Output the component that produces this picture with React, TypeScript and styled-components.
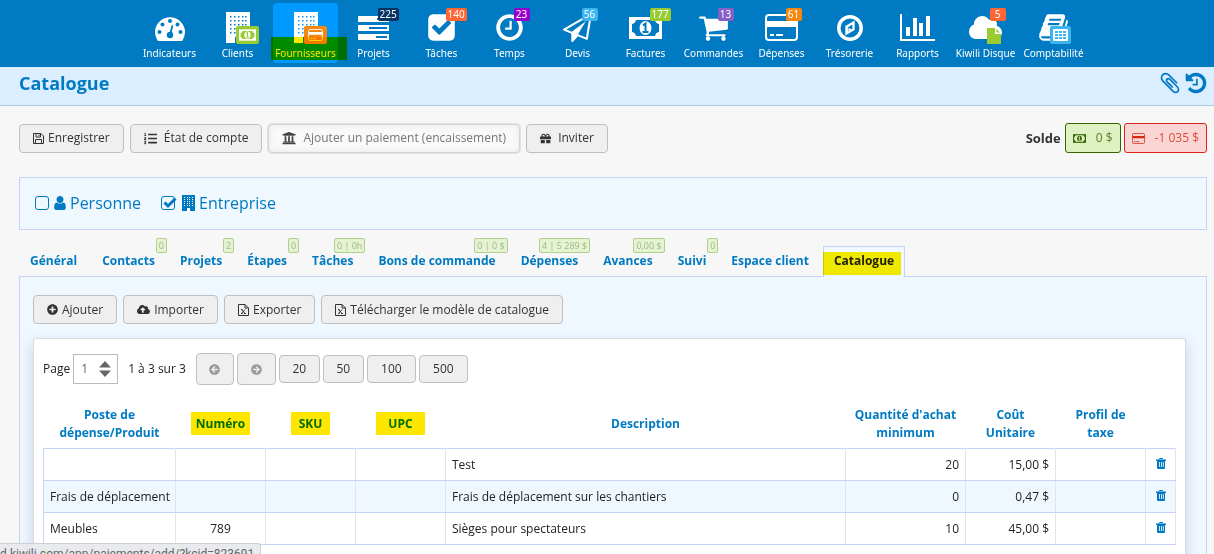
import React from "react";
import styled, { createGlobalStyle, css } from "styled-components";
import {
  FaCloud,
  FaCloudUploadAlt,
  FaListOl,
  FaUniversity,
  FaGift,
  FaPlusCircle,
  FaArrowCircleLeft,
  FaArrowCircleRight,
} from "react-icons/fa";

const blue = "#007ac2";
const line = "#c6d2f6";
const pale = "#eff7ff";

const GlobalStyle = createGlobalStyle`
  *, *::before, *::after { box-sizing: border-box; }
  body {
    margin: 0;
    background: #f7f7f7;
    color: #222;
    font-family: "Open Sans", "Noto Sans", sans-serif;
    font-size: 12px;
    line-height: 18px;
  }
  a { color: inherit; text-decoration: none; }
  button, input { font: inherit; color: inherit; }
`;

/* ---------- icons ---------- */

const PATHS = {
  plane:
    "M1764 11q33 24 27 64l-256 1536q-5 29-32 45-14 8-31 8-11 0-24-5l-527-215-298 327q-18 21-47 21-14 0-23-4-19-7-30-23.5t-11-36.5v-452l-472-193q-37-14-40-55-3-39 32-59l1664-960q35-21 68 2zm-342 1499l221-1323-1434 827 336 137 863-639-478 797z",
  book: "M1703 478q40 57 18 129l-275 906q-19 64-76.5 107.5t-122.5 43.5h-923q-77 0-148.5-53.5t-99.5-131.5q-24-67-2-127 0-4 3-27t4-37q1-8-3-21.5t-3-19.5q2-11 8-21t16.5-23.5 16.5-23.5q23-38 45-91.5t30-91.5q3-10 .5-30t-.5-28q3-11 17-28t17-23q21-36 42-92t25-90q1-9-2.5-32t.5-28q4-13 22-30.5t22-22.5q19-26 42.5-84.5t27.5-96.5q1-8-3-25.5t-2-26.5q2-8 9-18t18-23 17-21q8-12 16.5-30.5t15-35 16-36 19.5-32 26.5-23.5 36-11.5 47.5 5.5l-1 3q38-9 51-9h761q74 0 114 56t18 130l-274 906q-36 119-71.5 153.5t-128.5 34.5h-869q-27 0-38 15-11 16-1 43 24 70 144 70h923q29 0 56-15.5t35-41.5l300-987q7-22 5-57 38 15 59 43zm-1064 2q-4 13 2 22.5t20 9.5h608q13 0 25.5-9.5t16.5-22.5l21-64q4-13-2-22.5t-20-9.5h-608q-13 0-25.5 9.5t-16.5 22.5zm-83 256q-4 13 2 22.5t20 9.5h608q13 0 25.5-9.5t16.5-22.5l21-64q4-13-2-22.5t-20-9.5h-608q-13 0-25.5 9.5t-16.5 22.5z",
  cart: "M704 1536q0 52-38 90t-90 38-90-38-38-90 38-90 90-38 90 38 38 90zm896 0q0 52-38 90t-90 38-90-38-38-90 38-90 90-38 90 38 38 90zm128-1088v512q0 24-16.5 42.5t-40.5 21.5l-1044 122q13 60 13 70 0 16-24 64h920q26 0 45 19t19 45-19 45-45 19h-1024q-26 0-45-19t-19-45q0-11 8-31.5t16-36 21.5-40 15.5-29.5l-177-823h-204q-26 0-45-19t-19-45 19-45 45-19h256q16 0 28.5 6.5t19.5 15.5 13 24.5 8 26 5.5 29.5 4.5 26h1201q26 0 45 19t19 45z",
  check:
    "M813 1299l614-614q19-19 19-45t-19-45l-102-102q-19-19-45-19t-45 19l-467 467-211-211q-19-19-45-19t-45 19l-102 102q-19 19-19 45t19 45l358 358q19 19 45 19t45-19zm851-883v960q0 119-84.5 203.5t-203.5 84.5h-960q-119 0-203.5-84.5t-84.5-203.5v-960q0-119 84.5-203.5t203.5-84.5h960q119 0 203.5 84.5t84.5 203.5z",
  clock:
    "M1024 544v448q0 14-9 23t-23 9h-320q-14 0-23-9t-9-23v-64q0-14 9-23t23-9h224v-352q0-14 9-23t23-9h64q14 0 23 9t9 23zm416 352q0-148-73-273t-198-198-273-73-273 73-198 198-73 273 73 273 198 198 273 73 273-73 198-198 73-273zm224 0q0 209-103 385.5t-279.5 279.5-385.5 103-385.5-103-279.5-279.5-103-385.5 103-385.5 279.5-279.5 385.5-103 385.5 103 279.5 279.5 103 385.5z",
  history:
    "M1664 896q0 156-61 298t-164 245-245 164-298 61q-172 0-327-72.5t-264-204.5q-7-10-6.5-22.5t8.5-20.5l137-138q10-9 25-9 16 2 23 12 73 95 179 147t225 52q104 0 198.5-40.5t163.5-109.5 109.5-163.5 40.5-198.5-40.5-198.5-109.5-163.5-163.5-109.5-198.5-40.5q-98 0-188 35.5t-160 101.5l137 138q31 30 14 69-17 40-59 40h-448q-26 0-45-19t-19-45v-448q0-42 40-59 39-17 69 14l130 129q107-101 244.5-156.5t284.5-55.5q156 0 298 61t245 164 164 245 61 298zm-640-288v448q0 14-9 23t-23 9h-320q-14 0-23-9t-9-23v-64q0-14 9-23t23-9h224v-352q0-14 9-23t23-9h64q14 0 23 9t9 23z",
  clip: "M1596 1385q0 117-79 196t-196 79q-135 0-235-100l-777-776q-113-115-113-271 0-159 110-270t269-111q158 0 273 113l605 606q10 10 10 22 0 16-30.5 46.5t-46.5 30.5q-13 0-23-10l-606-607q-79-77-181-77-106 0-179 75t-73 181q0 105 76 181l776 777q63 63 145 63 64 0 106-42t42-106q0-82-63-145l-581-581q-26-24-60-24-29 0-48 19t-19 48q0 32 25 59l410 410q10 10 10 22 0 16-31 47t-47 31q-12 0-22-10l-410-410q-63-61-63-149 0-82 57-139t139-57q88 0 149 63l581 581q100 98 100 235z",
};

const Glyph = ({ name, size }: { name: keyof typeof PATHS; size: number }) => (
  <svg width={size} height={size} viewBox="0 0 1792 1792" fill="currentColor" aria-hidden>
    <path d={PATHS[name]} />
  </svg>
);

const UserIcon = () => (
  <svg width="12" height="14" viewBox="256 128 1280 1536" fill="currentColor" aria-hidden>
    <path d="M1536 1399q0 109-62.5 187t-150.5 78h-854q-88 0-150.5-78t-62.5-187q0-85 8.5-160.5t31.5-152 58.5-131 94-89 134.5-34.5q131 128 313 128t313-128q76 0 134.5 34.5t94 89 58.5 131 31.5 152 8.5 160.5zm-256-887q0 159-112.5 271.5t-271.5 112.5-271.5-112.5-112.5-271.5 112.5-271.5 271.5-112.5 271.5 112.5 112.5 271.5z" />
  </svg>
);

const Gauge = () => (
  <svg width="32" height="26" viewBox="0 0 32 26" aria-hidden>
    <path d="M3.500 25.500A15 15 0 1 1 28.500 25.500Q28 26 27 26H5Q4 26 3.500 25.500z" fill="#fff" />
    <g fill={blue}>
      <circle cx="5.500" cy="17" r="2" />
      <circle cx="8.500" cy="9.500" r="2" />
      <circle cx="16" cy="6" r="2" />
      <circle cx="23.500" cy="9.500" r="2" />
      <circle cx="26.500" cy="17" r="2" />
      <circle cx="16" cy="20" r="3.200" />
    </g>
    <path d="M16.300 19L18.300 11" stroke={blue} strokeWidth="1.800" strokeLinecap="round" />
  </svg>
);

const Building = ({ hole = blue }: { hole?: string }) => (
  <svg width="24" height="31" viewBox="0 0 24 31" aria-hidden>
    <rect width="24" height="31" fill="currentColor" />
    {[4, 8, 12, 16, 20].map((y) =>
      [4, 8, 12, 16, 19].map((x) => (
        <rect key={`${x}-${y}`} x={x} y={y} width="1.500" height="1.500" fill={hole} />
      ))
    )}
    <rect x="9" y="25" width="6" height="6" fill={hole} />
  </svg>
);

const SmallBuilding = () => (
  <svg width="13" height="16" viewBox="0 0 13 16" aria-hidden>
    <rect width="13" height="16" fill="currentColor" />
    {[2, 4, 6, 8, 10].map((y) =>
      [2, 5, 7, 10].map((x) => <rect key={`${x}-${y}`} x={x} y={y} width="1" height="1" fill="#fff" />)
    )}
    <rect x="5" y="13" width="3" height="3" fill="#fff" />
  </svg>
);

const Note = ({ width, height, hole = blue }: { width: number; height: number; hole?: string }) => (
  <svg width={width} height={height} viewBox="0 0 33 22" aria-hidden>
    <rect width="33" height="22" fill="currentColor" />
    <path d="M7 3H26A5 5 0 0 0 30 7V15A5 5 0 0 0 26 19H7A5 5 0 0 0 3 15V7A5 5 0 0 0 7 3z" fill={hole} />
    <ellipse cx="16.500" cy="11" rx="6" ry="7" fill="currentColor" />
    <path d="M14 8.500L16.500 6.500V14.500M13.500 15H19.500" stroke={hole} strokeWidth="2" fill="none" />
  </svg>
);

const Card = ({ width, height }: { width: number; height: number }) => (
  <svg width={width} height={height} viewBox="0 0 33 27" aria-hidden>
    <rect x="1" y="1" width="31" height="25" rx="3" fill="none" stroke="currentColor" strokeWidth="2" />
    <path d="M1 7H32V13H1zM5 20H9V22H5zM11 20H18V22H11z" fill="currentColor" />
  </svg>
);

const Servers = () => (
  <svg width="31" height="24" viewBox="0 0 31 24" aria-hidden>
    <path d="M0 0H31V6H0zM0 9H31V15H0zM0 18H31V24H0z" fill="#fff" />
    <path d="M19 2H29V4H19zM11 11H29V13H11zM18 20H29V22H18z" fill={blue} />
  </svg>
);

const Compass = () => (
  <svg width="26" height="26" viewBox="0 0 26 26" aria-hidden>
    <circle cx="13" cy="13" r="11.200" fill="none" stroke="#fff" strokeWidth="3.500" />
    <path d="M8.300 11L17.700 5.500V15L8.300 20.500z" fill="#fff" />
    <path d="M10.800 12.500L15.300 9.500V13.800L11 16.600z" fill={blue} />
    <path d="M11.500 12.700L15 14.700L11.500 16.500z" fill="#fff" />
  </svg>
);

const Bars = () => (
  <svg width="35" height="27" viewBox="0 0 35 27" aria-hidden>
    <path
      d="M0 0H2V25H35V27H0zM6 13H10V22H6zM13 4H17V22H13zM19 9H23V22H19zM26 2H30V22H26z"
      fill="#fff"
    />
  </svg>
);

const Leaf = () => (
  <svg width="14" height="16" viewBox="0 0 14 16" aria-hidden>
    <path d="M0 0H8V6H14V16H0z" fill="#9c3" />
    <path d="M9 0L14 5H9z" fill="#9c3" stroke="#fff" strokeWidth="1" />
  </svg>
);

const Sheet = () => (
  <svg width="21" height="18" viewBox="0 0 21 18" aria-hidden>
    <rect width="21" height="18" rx="2" fill="#3cb4f0" />
    <rect x="3" y="3" width="15" height="12" rx="1" fill="#fff" />
    {[5, 8, 11].map((y) =>
      [5, 9, 13].map((x) => <rect key={`${x}-${y}`} x={x} y={y} width="3" height="2" fill="#3cb4f0" />)
    )}
  </svg>
);

const Trash = () => (
  <svg width="10" height="11" viewBox="0 0 10 11" aria-hidden>
    <path d="M3 1.500Q3 .500 4 .500H6Q7 .500 7 1.500" fill="none" stroke={blue} />
    <path d="M0 1.500H10V3H0z" fill={blue} />
    <path d="M1 3H9V10Q9 11 8 11H2Q1 11 1 10z" fill={blue} />
    <path d="M3.500 4V9M5.500 4V9M7.300 4V9" stroke="#cfe5f5" strokeWidth="1" />
  </svg>
);

const Floppy = () => (
  <svg width="11" height="11" viewBox="0 0 11 11" fill="none" stroke="currentColor" aria-hidden>
    <path d="M.500 .500H8L10.500 3V10.500H.500zM3 .500V4H7.500V.500M2.500 10.500V6.500H8.500V10.500M6 1.500V3" />
  </svg>
);

const ExcelFile = () => (
  <svg width="11" height="12" viewBox="0 0 11 12" fill="none" stroke="currentColor" aria-hidden>
    <path d="M.500 .500H7L10.500 4V11.500H.500zM7 .500V4H10.500" />
    <path d="M3.500 5.500L7 9.500M7 5.500L3.500 9.500M3 9.500H4.500M6 9.500H8M3 5.500H4.500" />
  </svg>
);

/* ---------- top navigation ---------- */

const Page = styled.div`
  display: flex;
  flex-direction: column;
  min-height: 100vh;
`;

const Nav = styled.nav`
  display: flex;
  gap: 3px;
  height: 67px;
  padding: 3px 0 4px 137px;
  background: ${blue};
  color: #fff;
  font: 10px/14px "Noto Sans", "Open Sans", sans-serif;
`;

const highlight = (colour: string) => css`
  content: "";
  position: absolute;
  background: ${colour};
  mix-blend-mode: multiply;
  pointer-events: none;
`;

const NavItem = styled.a<{ $active?: boolean }>`
  position: relative;
  display: flex;
  flex: 0 0 65px;
  flex-direction: column;
  align-items: center;
  border-radius: 4px;
  white-space: nowrap;
  ${(p) =>
    p.$active &&
    css`
      background: #0099ff;
      &::after {
        ${highlight("#ffe600")}
        inset: 34px -9px 3px -2px;
      }
    `}
`;

const NavIcon = styled.span`
  position: relative;
  display: flex;
  align-items: center;
  justify-content: center;
  height: 43px;
  padding-top: 6px;
`;

const Count = styled.span<{ $bg: string }>`
  position: absolute;
  top: 5px;
  left: 50%;
  min-width: 16px;
  padding: 0 2px;
  margin-left: 4px;
  border-radius: 2px;
  background: ${(p) => p.$bg};
  line-height: 13px;
  text-align: center;
`;

const Overlay = styled.span<{ $right: number }>`
  position: absolute;
  right: ${(p) => p.$right}px;
  bottom: 2px;
  display: flex;
`;

const Tag = styled.span<{ $bg: string }>`
  display: flex;
  padding: 3px;
  border-radius: 2px;
  background: ${(p) => p.$bg};
`;

const navItems: { label: string; icon: React.ReactNode; count?: string; bg?: string; active?: boolean }[] = [
  { label: "Indicateurs", icon: <Gauge /> },
  {
    label: "Clients",
    icon: (
      <>
        <Building />
        <Overlay $right={-9}>
          <Tag $bg="#9c3">
            <Note width={17} height={12} hole="#9c3" />
          </Tag>
        </Overlay>
      </>
    ),
  },
  {
    label: "Fournisseurs",
    active: true,
    icon: (
      <>
        <Building hole="#0099ff" />
        <Overlay $right={-9}>
          <Tag $bg="#f5860f">
            <Card width={17} height={12} />
          </Tag>
        </Overlay>
      </>
    ),
  },
  { label: "Projets", icon: <Servers />, count: "225", bg: "#063264" },
  { label: "Tâches", icon: <Glyph name="check" size={31} />, count: "140", bg: "#ff6633" },
  { label: "Temps", icon: <Glyph name="clock" size={31} />, count: "23", bg: "#9900cc" },
  { label: "Devis", icon: <Glyph name="plane" size={29} />, count: "56", bg: "#3cb4f0" },
  { label: "Factures", icon: <Note width={33} height={22} />, count: "177", bg: "#99cc33" },
  { label: "Commandes", icon: <Glyph name="cart" size={31} />, count: "13", bg: "#8560c8" },
  { label: "Dépenses", icon: <Card width={33} height={27} />, count: "61", bg: "#f5860f" },
  { label: "Trésorerie", icon: <Compass /> },
  { label: "Rapports", icon: <Bars /> },
  {
    label: "Kiwili Disque",
    icon: (
      <>
        <FaCloud size={33} />
        <Overlay $right={1}>
          <Leaf />
        </Overlay>
      </>
    ),
    count: "5",
    bg: "#ff6633",
  },
  {
    label: "Comptabilité",
    icon: (
      <>
        <Glyph name="book" size={31} />
        <Overlay $right={-2}>
          <Sheet />
        </Overlay>
      </>
    ),
  },
];

/* ---------- page header ---------- */

const TitleBar = styled.header`
  display: flex;
  align-items: center;
  justify-content: space-between;
  height: 39px;
  padding: 0 6px 6px 19px;
  border-bottom: 1px solid #a9cbe2;
  background: #dbeeff;
  color: ${blue};
`;

const Title = styled.h1`
  margin: 0;
  font-size: 18px;
  line-height: 24px;
`;

const TitleActions = styled.div`
  display: flex;
  gap: 2px;
`;

const IconButton = styled.button`
  display: inline-flex;
  align-items: center;
  justify-content: center;
  padding: 0;
  border: 0;
  background: none;
  cursor: pointer;
`;

const Main = styled.main`
  display: flex;
  flex: 1;
  flex-direction: column;
  padding: 17px 7px 0 19px;
`;

const Toolbar = styled.div`
  display: flex;
  align-items: center;
  gap: 6px;
`;

const Button = styled.button<{ $faded?: boolean; $gap?: number }>`
  display: inline-flex;
  align-items: center;
  gap: ${(p) => p.$gap ?? 5}px;
  height: 29px;
  padding: 0 13px;
  border: 1px solid #bfbfbf;
  border-radius: 4px;
  background: #efefef;
  color: #333;
  white-space: nowrap;
  cursor: pointer;
  ${(p) =>
    p.$faded &&
    css`
      border-color: #d4d4d4;
      background: #f9f9f9;
      box-shadow: 0 0 0 1px #e2e2e2, inset 0 0 6px #e8e8e8;
      color: #777;
      svg {
        color: #444;
      }
    `}
`;

const Balance = styled.div`
  display: flex;
  align-items: center;
  gap: 3px;
  margin-left: auto;
`;

const BalanceLabel = styled.strong`
  margin-right: 1px;
  color: #333;
  font-size: 13px;
`;

const Amount = styled.span<{ $fg: string; $bg: string }>`
  display: flex;
  align-items: center;
  gap: 10px;
  height: 30px;
  padding: 0 7px;
  border: 1px solid ${(p) => p.$fg};
  border-radius: 3px;
  background: ${(p) => p.$bg};
  color: ${(p) => p.$fg};
`;

const AmountText = styled.span`
  opacity: 0.8;
`;

/* ---------- contact kind ---------- */

const KindBox = styled.section`
  display: flex;
  align-items: center;
  gap: 20px;
  height: 53px;
  margin-top: 24px;
  padding: 0 15px 2px;
  border: 1px solid ${line};
  background: ${pale};
  color: ${blue};
  font-size: 16px;
  line-height: 22px;
`;

const Kind = styled.label`
  display: flex;
  align-items: center;
  gap: 4px;
  cursor: pointer;
`;

const Tick = styled.span<{ $width: number }>`
  position: relative;
  display: flex;
  width: ${(p) => p.$width}px;
  svg {
    position: absolute;
    inset: 0;
    pointer-events: none;
  }
`;

const Checkbox = styled.input`
  width: 14px;
  height: 14px;
  margin: 0;
  border: 1px solid ${blue};
  border-radius: 3px;
  appearance: none;
`;

/* ---------- tabs ---------- */

const Tabs = styled.nav`
  position: relative;
  z-index: 1;
  display: flex;
  gap: 3px;
  margin: 16px 0 -1px;
`;

const Tab = styled.a<{ $active?: boolean }>`
  position: relative;
  height: 31px;
  padding: 5px 10px;
  border: 1px solid transparent;
  border-bottom: 0;
  color: ${blue};
  font-weight: 700;
  white-space: nowrap;
  ${(p) =>
    p.$active &&
    css`
      border-color: ${line};
      background: ${pale};
      color: #222;
      &::after {
        ${highlight("#fff000")}
        inset: 5px 3px 2px -1px;
      }
    `}
`;

const TabCount = styled.span`
  position: absolute;
  top: -9px;
  right: -2px;
  padding: 0 2px;
  border: 1px solid #b0d08c;
  border-radius: 2px;
  background: #e6f3d3;
  color: #9fb986;
  font-size: 9px;
  font-weight: 400;
  line-height: 13px;
`;

const tabs: [string, string?][] = [
  ["Général"],
  ["Contacts", "0"],
  ["Projets", "2"],
  ["Étapes", "0"],
  ["Tâches", "0 | 0h"],
  ["Bons de commande", "0 | 0 $"],
  ["Dépenses", "4 | 5 289 $"],
  ["Avances", "0,00 $"],
  ["Suivi", "0"],
  ["Espace client"],
  ["Catalogue"],
];

/* ---------- catalogue ---------- */

const Panel = styled.section`
  display: flex;
  flex: 1;
  flex-direction: column;
  gap: 14px;
  padding: 18px 20px 0 13px;
  border: 1px solid ${line};
  border-bottom: 0;
  background: ${pale};
`;

const Sheetlike = styled.div`
  flex: 1;
  padding: 14px 9px 9px;
  border: 1px solid #dcdcdc;
  border-bottom: 0;
  border-radius: 3px 3px 0 0;
  background: #fff;
  box-shadow: 0 6px 14px rgba(80, 100, 140, 0.25);
`;

const Pager = styled.div`
  display: flex;
  align-items: center;
  gap: 3px;
  height: 32px;
`;

const PageLabel = styled.label`
  display: flex;
  align-items: center;
  gap: 3px;
`;

const NumberBox = styled.span`
  display: flex;
  align-items: center;
  width: 45px;
  height: 30px;
  padding: 0 6px 0 7px;
  border: 1px solid #bbb;
  background: #fff;
`;

const NumberInput = styled.input`
  flex: 1;
  min-width: 0;
  padding: 0;
  border: 0;
  background: none;
  color: #757;
`;

const Range = styled.span`
  margin: 0 7px;
`;

const PagerButton = styled(Button)<{ $width: number; $tall?: boolean }>`
  justify-content: center;
  width: ${(p) => p.$width}px;
  height: ${(p) => (p.$tall ? 32 : 28)}px;
  padding: 0;
  &:disabled {
    color: #999;
  }
`;

const Table = styled.table`
  width: 100%;
  margin-top: 15px;
  border-collapse: collapse;
  table-layout: fixed;
`;

const Th = styled.th<{ $width?: number }>`
  width: ${(p) => (p.$width ? `${p.$width}px` : "auto")};
  padding: 6px;
  color: ${blue};
  font-weight: 700;
`;

const Marked = styled.span<{ $pad: number }>`
  position: relative;
  padding: 3px ${(p) => p.$pad}px;
  &::after {
    ${highlight("#ffe600")}
    inset: 0;
  }
`;

const Row = styled.tr`
  height: 32px;
  border-left: 1px solid ${line};
  &:nth-child(even) {
    background: ${pale};
  }
`;

const Td = styled.td<{ $align?: string }>`
  padding: 0 6px;
  border-top: 1px solid ${line};
  border-right: 1px solid #e4e4e8;
  border-bottom: 1px solid ${line};
  text-align: ${(p) => p.$align || "left"};
  white-space: nowrap;
`;

const rows = [
  ["", "", "Test", "20", "15,00 $"],
  ["Frais de déplacement", "", "Frais de déplacement sur les chantiers", "0", "0,47 $"],
  ["Meubles", "789", "Sièges pour spectateurs", "10", "45,00 $"],
];

const StatusBubble = styled.div`
  position: fixed;
  bottom: 0;
  left: 0;
  z-index: 2;
  height: 11px;
  padding: 1px 6px 0 0;
  overflow: hidden;
  border: 1px solid #d0d0d4;
  border-width: 1px 1px 0 0;
  border-radius: 0 3px 0 0;
  background: #e8eaed;
  color: #666;
  font-family: Roboto, "Open Sans", sans-serif;
  white-space: nowrap;
`;

export default function App() {
  return (
    <Page>
      <GlobalStyle />
      <Nav>
        {navItems.map((item) => (
          <NavItem key={item.label} href="#" $active={item.active}>
            <NavIcon>{item.icon}</NavIcon>
            {item.label}
            {item.count && <Count $bg={item.bg!}>{item.count}</Count>}
          </NavItem>
        ))}
      </Nav>

      <TitleBar>
        <Title>Catalogue</Title>
        <TitleActions>
          <IconButton aria-label="Pièces jointes">
            <Glyph name="clip" size={24} />
          </IconButton>
          <IconButton aria-label="Historique">
            <Glyph name="history" size={24} />
          </IconButton>
        </TitleActions>
      </TitleBar>

      <Main>
        <Toolbar>
          <Button $gap={4}>
            <Floppy /> Enregistrer
          </Button>
          <Button $gap={7}>
            <FaListOl size={13} /> État de compte
          </Button>
          <Button $gap={7} $faded>
            <FaUniversity size={14} /> Ajouter un paiement (encaissement)
          </Button>
          <Button $gap={7}>
            <FaGift size={11} /> Inviter
          </Button>
          <Balance>
            <BalanceLabel>Solde</BalanceLabel>
            <Amount $fg="#336600" $bg="#dff0c2">
              <Note width={13} height={9} hole="#dff0c2" />
              <AmountText>0 $</AmountText>
            </Amount>
            <Amount $fg="#d62815" $bg="#f9d6d3">
              <Card width={13} height={11} />
              <AmountText>-1 035 $</AmountText>
            </Amount>
          </Balance>
        </Toolbar>

        <KindBox>
          <Kind>
            <Tick $width={15}>
              <Checkbox type="checkbox" />
            </Tick>
            <UserIcon />
            Personne
          </Kind>
          <Kind>
            <Tick $width={17}>
              <Checkbox type="checkbox" defaultChecked />
              <svg width="16" height="14" viewBox="0 0 16 14" overflow="visible" aria-hidden>
                <path d="M3.500 6.500L7 10L14.500 2.500" fill="none" stroke={blue} strokeWidth="3" />
              </svg>
            </Tick>
            <SmallBuilding />
            Entreprise
          </Kind>
        </KindBox>

        <Tabs>
          {tabs.map(([label, count]) => (
            <Tab key={label} href="#" $active={label === "Catalogue"}>
              {label}
              {count && <TabCount>{count}</TabCount>}
            </Tab>
          ))}
        </Tabs>

        <Panel>
          <Toolbar>
            <Button $gap={4}>
              <FaPlusCircle size={11} /> Ajouter
            </Button>
            <Button $gap={4}>
              <FaCloudUploadAlt size={13} /> Importer
            </Button>
            <Button $gap={4}>
              <ExcelFile /> Exporter
            </Button>
            <Button $gap={4}>
              <ExcelFile /> Télécharger le modèle de catalogue
            </Button>
          </Toolbar>

          <Sheetlike>
            <Pager>
              <PageLabel>
                Page
                <NumberBox>
                  <NumberInput type="text" inputMode="numeric" defaultValue="1" />
                  <svg width="12" height="16" viewBox="0 0 12 16" fill="#666" aria-hidden>
                    <path d="M6 0L12 6.500H0zM0 9.500H12L6 16z" />
                  </svg>
                </NumberBox>
              </PageLabel>
              <Range>1 à 3 sur 3</Range>
              <PagerButton $width={38} $tall disabled aria-label="Page précédente">
                <FaArrowCircleLeft size={11} />
              </PagerButton>
              <PagerButton $width={39} $tall disabled aria-label="Page suivante">
                <FaArrowCircleRight size={11} />
              </PagerButton>
              <PagerButton $width={41}>20</PagerButton>
              <PagerButton $width={41}>50</PagerButton>
              <PagerButton $width={49}>100</PagerButton>
              <PagerButton $width={49}>500</PagerButton>
            </Pager>

            <Table>
              <thead>
                <tr>
                  <Th $width={132}>Poste de dépense/Produit</Th>
                  <Th $width={90}>
                    <Marked $pad={5}>Numéro</Marked>
                  </Th>
                  <Th $width={90}>
                    <Marked $pad={8}>SKU</Marked>
                  </Th>
                  <Th $width={90}>
                    <Marked $pad={12}>UPC</Marked>
                  </Th>
                  <Th>Description</Th>
                  <Th $width={120}>Quantité d'achat minimum</Th>
                  <Th $width={90}>Coût Unitaire</Th>
                  <Th $width={90}>Profil de taxe</Th>
                  <Th $width={30} />
                </tr>
              </thead>
              <tbody>
                {rows.map(([item, number, description, quantity, cost]) => (
                  <Row key={description}>
                    <Td>{item}</Td>
                    <Td $align="center">{number}</Td>
                    <Td />
                    <Td />
                    <Td>{description}</Td>
                    <Td $align="right">{quantity}</Td>
                    <Td $align="right">{cost}</Td>
                    <Td />
                    <Td $align="center">
                      <IconButton aria-label="Supprimer">
                        <Trash />
                      </IconButton>
                    </Td>
                  </Row>
                ))}
              </tbody>
            </Table>
          </Sheetlike>
        </Panel>
      </Main>

      <StatusBubble>d.kiwili.com/app/paiements/add/?kcid=823691</StatusBubble>
    </Page>
  );
}
